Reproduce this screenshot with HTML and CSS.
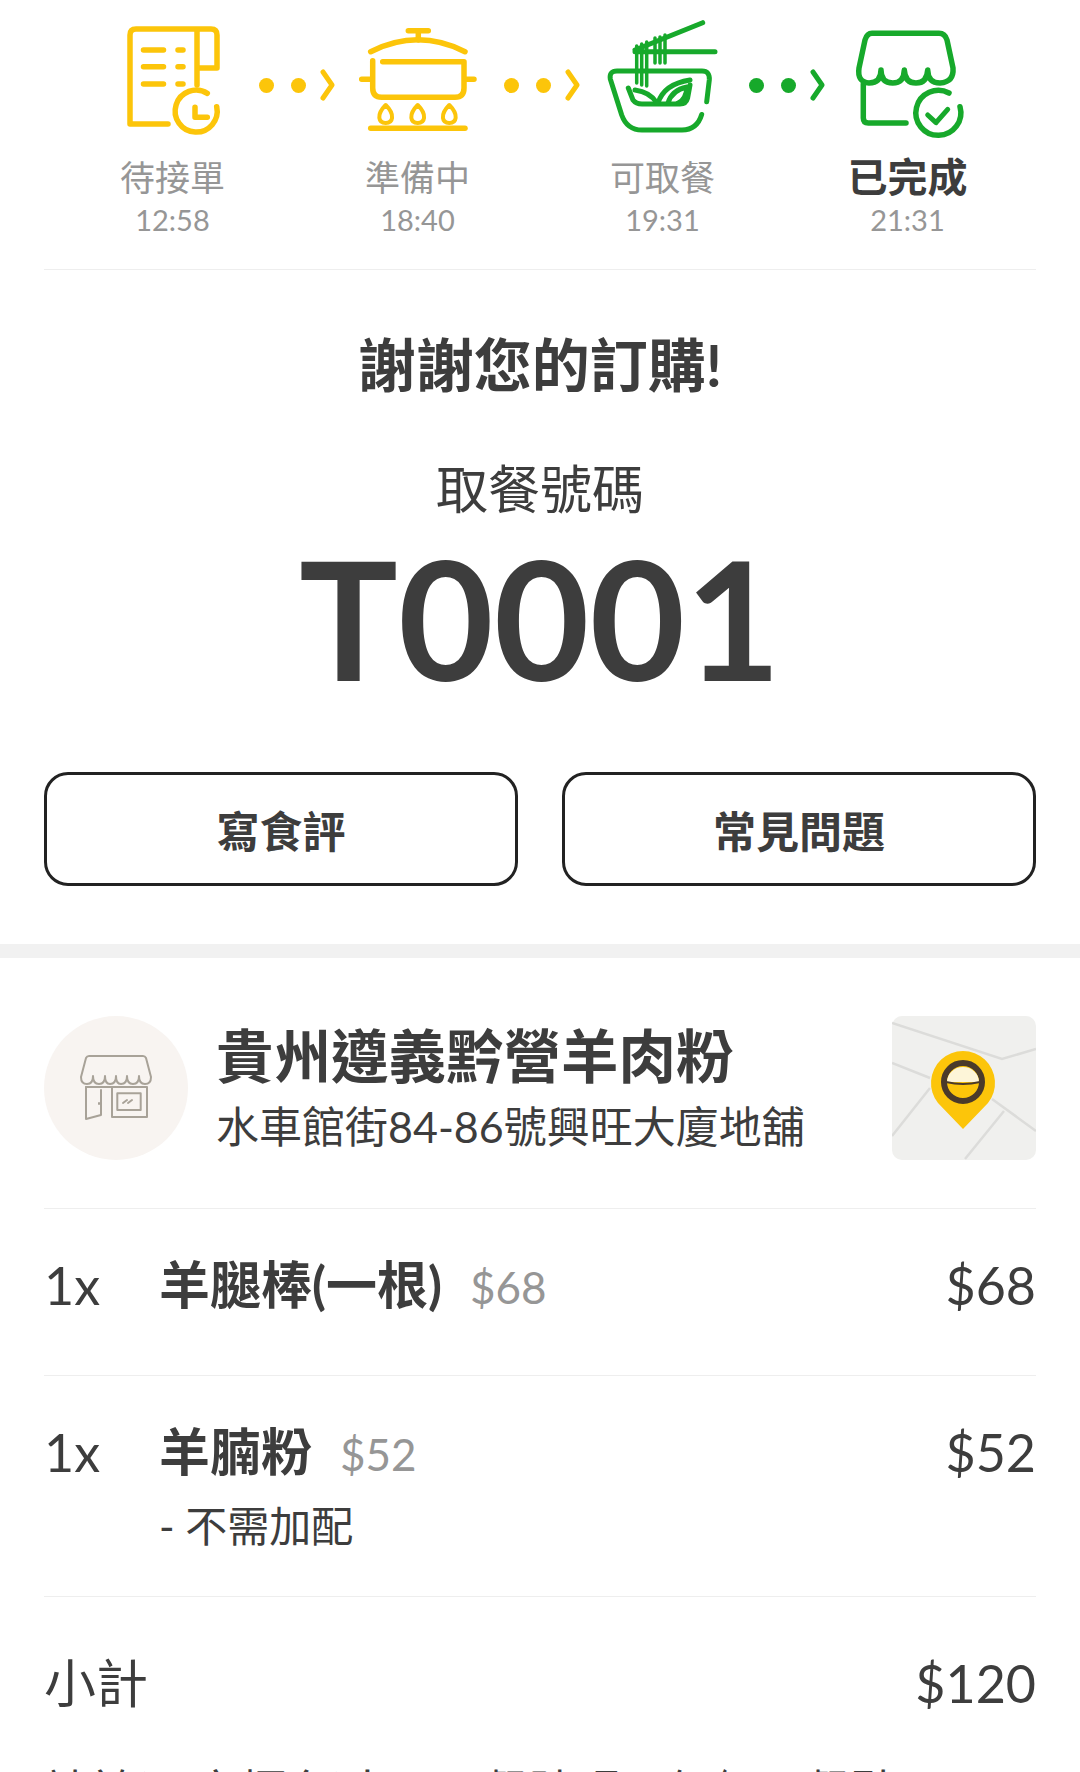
FILE: index.html
```html
<!DOCTYPE html>
<html lang="zh-Hant">
<head>
    <meta charset="UTF-8">
    <title>訂單</title>
    <link rel="stylesheet" href="styles.css">
</head>
<body>
    <div id="top">
        <div id="steps">
            <div class="step">
                <svg class="step-icon" viewBox="108 14 130 130" fill="none" stroke="#fcc50a" stroke-width="5.5" stroke-linecap="round" stroke-linejoin="round">
                    <path d="M168 124H130V35q0-6 6-6h75q6 0 6 6v33h-18"/>
                    <path d="M197 85V31"/>
                    <path d="M143.500 50h20M143.500 66.700h20M143.500 84h20M178 50h5M178 66.700h5M178 84h5"/>
                    <path d="M207.300 93.300A21 21 0 1 0 216.700 106.700"/>
                    <path d="M195 107.300v10h12.300"/>
                </svg>
                <div class="step-name">待接單</div>
                <div class="step-time">12:58</div>
            </div>
            <div class="dots yellow"><i></i><i></i>
                <svg viewBox="0 0 15 32" fill="none" stroke="currentColor" stroke-width="5" stroke-linecap="round" stroke-linejoin="round"><path d="M3 3l9 13-9 13"/></svg>
            </div>
            <div class="step">
                <svg class="step-icon" viewBox="353 14 130 130" fill="none" stroke="#fcc50a" stroke-width="5.500" stroke-linecap="round" stroke-linejoin="round">
                    <path d="M408.300 30.700h20M418.300 30.700V40"/>
                    <path d="M370.700 51.700Q418 28 465 51.700"/>
                    <path d="M372.700 60.700V88q0 9.300 9 9.300H455q9 0 9-9.300V61.700H382.700"/>
                    <path d="M361.700 79.300h10M465 79.300h9"/>
                    <path d="M370.700 128.300H465"/>
                    <path d="M385.700 105c-10 10-7 18 0 18s10-8 0-18zM417.700 105c-10 10-7 18 0 18s10-8 0-18zM449.300 105c-10 10-7 18 0 18s10-8 0-18z" stroke-width="4"/>
                </svg>
                <div class="step-name">準備中</div>
                <div class="step-time">18:40</div>
            </div>
            <div class="dots yellow"><i></i><i></i>
                <svg viewBox="0 0 15 32" fill="none" stroke="currentColor" stroke-width="5" stroke-linecap="round" stroke-linejoin="round"><path d="M3 3l9 13-9 13"/></svg>
            </div>
            <div class="step">
                <svg class="step-icon" viewBox="598 14 130 130" fill="none" stroke="#17a92b" stroke-width="5" stroke-linecap="round" stroke-linejoin="round">
                    <path d="M706.700 101.700L709.300 80Q710 71 702 71H617Q609 71 610.300 79L621.700 115Q627 130 642 130H682Q697 130 701.700 114.500"/>
                    <path d="M628.300 88L633 100Q636 104 642 104H680Q686 104 687.600 98L690 85"/>
                    <path d="M635 50L702.700 22.700M635 51.700H715"/>
                    <path d="M636.700 46V83M641.700 44V85M646.700 42V86M655 38V63M660 37V63M665 35V63" stroke-width="3.500"/>
                    <path d="M658 103Q664 84 690 80"/>
                    <path d="M668 103Q672 90 687 87Q686 100 678 103"/>
                    <path d="M635 90Q650 92 657 103"/>
                </svg>
                <div class="step-name">可取餐</div>
                <div class="step-time">19:31</div>
            </div>
            <div class="dots green"><i></i><i></i>
                <svg viewBox="0 0 15 32" fill="none" stroke="currentColor" stroke-width="5" stroke-linecap="round" stroke-linejoin="round"><path d="M3 3l9 13-9 13"/></svg>
            </div>
            <div class="step done">
                <svg class="step-icon" viewBox="842 14 130 130" fill="none" stroke="#17a92b" stroke-width="5.500" stroke-linecap="round" stroke-linejoin="round">
                    <path d="M871 33.300H938Q944 33.300 946 40L952 68Q953 82 939 83Q927 83 926.700 70Q926 83 915 83Q904 83 903.300 70Q903 83 891.700 83Q880 83 880 70Q880 83 868 83Q856 82 858 68L864 40Q866 33.300 871 33.300Z"/>
                    <path d="M862.300 84V118q0 5 5 5H905"/>
                    <path d="M948 93A22.500 22.500 0 1 0 959 106.700"/>
                    <path d="M926.700 115l8.300 7.700 11.700-13.400" stroke-width="5"/>
                </svg>
                <div class="step-name">已完成</div>
                <div class="step-time">21:31</div>
            </div>
        </div>
        <div class="thanks">謝謝您的訂購!</div>
        <div class="pickup-label">取餐號碼</div>
        <div class="pickup-num">T0001</div>
        <div class="btns">
            <button class="btn">寫食評</button>
            <button class="btn">常見問題</button>
        </div>
    </div>
    <div id="bottom">
        <div class="shop">
            <div class="shop-logo">
                <svg viewBox="0 0 72 66" fill="none" stroke="#a8a298" stroke-width="2" stroke-linecap="round" stroke-linejoin="round">
                    <path d="M9 1H63Q65 1 66 3L71 22Q71 29 65 29 59 29 59 21 59 29 53 29 47 29 47 21 47 29 41 29 36 29 36 21 36 29 30 29 25 29 25 21 25 29 19 29 13 29 13 21 13 29 7 29 1 29 1 22L6 3Q7 1 9 1Z"/>
                    <path d="M6 32H67V62H32V32"/>
                    <path d="M6 32V64L21 60V35"/>
                    <path d="M37.300 38.300H60.700V55H37.300Z"/>
                    <path d="M43 48l4-3M48 48l4-3"/>
                    <path d="M19 48v1"/>
                </svg>
            </div>
            <div class="shop-info">
                <div class="shop-name">貴州遵義黔營羊肉粉</div>
                <div class="shop-addr">水車館街84-86號興旺大廈地舖</div>
            </div>
            <svg class="shop-map" viewBox="0 0 144 144">
                <rect width="144" height="144" rx="10" fill="#f0f0ee"/>
                <path d="M0 7L110 43 144 33M0 47L38 62M100 83L144 115M38 72L0 120M112 95L73 143" fill="none" stroke="#dcdcda" stroke-width="2.500"/>
                <path d="M71 113L46 87A32 32 0 1 1 96 87Z" fill="#fcc50a"/>
                <circle cx="71" cy="66" r="19" fill="#fcc50a" stroke="#4a3a2a" stroke-width="6"/>
                <path d="M55 66a16 15 0 0 1 32 0z" fill="#fdf5d8"/>
                <path d="M54 66q17 4 34 0" fill="none" stroke="#4a3a2a" stroke-width="2"/>
            </svg>
        </div>
        <div class="item">
            <div class="qty">1x</div>
            <div class="item-main">
                <div class="item-title"><span class="item-name">羊腿棒(一根)</span><span class="item-unit">$68</span></div>
            </div>
            <div class="item-price">$68</div>
        </div>
        <div class="item">
            <div class="qty">1x</div>
            <div class="item-main">
                <div class="item-title"><span class="item-name">羊腩粉</span><span class="item-unit">$52</span></div>
                <div class="item-opt">- 不需加配</div>
            </div>
            <div class="item-price">$52</div>
        </div>
        <div class="total-row">
            <span>小計</span>
            <span>$120</span>
        </div>
        <div class="note">請於(門市櫃台)出示取餐號碼以便領取餐點</div>
    </div>
</body>
</html>
```

FILE: styles.css
```css
* { margin: 0; padding: 0; box-sizing: border-box; }
body {
    width: 1080px;
    height: 1772px;
    overflow: hidden;
    background-color: #fff;
    color: #3d3d3d;
    font-family: Lato, "Noto Sans CJK TC", sans-serif;
}
#top {
    padding: 0 44px;
}
#steps {
    height: 270px;
    display: flex;
    justify-content: center;
    align-items: flex-start;
    border-bottom: 1px solid #eee;
    padding-top: 14px;
}
.step {
    width: 130px;
    display: flex;
    flex-direction: column;
    align-items: center;
}
.step-icon {
    width: 130px;
    height: 130px;
    display: block;
}
.step-name {
    font-size: 35px;
    line-height: 40px;
    margin-top: 13px;
    color: #969696;
    white-space: nowrap;
}
.step-time {
    font-size: 29px;
    line-height: 34px;
    margin-top: 6px;
    color: #969696;
}
.done .step-name {
    font-weight: 700;
    font-size: 40px;
    color: #3d3d3d;
}
.dots {
    width: 115px;
    height: 130px;
    display: flex;
    justify-content: center;
    align-items: center;
    gap: 17px;
    margin-top: 6px;
    padding-left: 3px;
}
.dots i {
    width: 15px;
    height: 15px;
    border-radius: 50%;
    background-color: currentColor;
}
.dots svg {
    width: 15px;
    height: 32px;
    margin-left: -3px;
}
.yellow { color: #fcc50a; }
.green { color: #17a92b; }
.thanks {
    text-align: center;
    font-size: 58px;
    font-weight: 700;
    line-height: 70px;
    margin-top: 60px;
}
.pickup-label {
    text-align: center;
    font-size: 52px;
    line-height: 66px;
    margin-top: 56px;
}
.pickup-num {
    text-align: center;
    font-size: 165px;
    font-weight: 700;
    line-height: 180px;
    margin-top: 5px;
}
.btns {
    display: flex;
    gap: 44px;
    margin-top: 65px;
}
.btn {
    flex: 1;
    height: 114px;
    background-color: #fff;
    border: 3px solid #222;
    border-radius: 24px;
    font-family: inherit;
    font-size: 43px;
    font-weight: 700;
    color: #3d3d3d;
}
#bottom {
    margin-top: 58px;
    border-top: 14px solid #f1f1f1;
    padding: 0 44px;
}
.shop {
    display: flex;
    align-items: center;
    padding: 58px 0 48px;
    border-bottom: 1px solid #eee;
}
.shop-logo {
    width: 144px;
    height: 144px;
    border-radius: 50%;
    background-color: #f8f4f1;
    display: flex;
    justify-content: center;
    align-items: center;
    flex-shrink: 0;
}
.shop-logo svg {
    width: 72px;
    height: 66px;
}
.shop-info {
    flex: 1;
    padding-left: 28px;
}
.shop-name {
    font-size: 57.5px;
    font-weight: 700;
    line-height: 70px;
}
.shop-addr {
    font-size: 43px;
    line-height: 56px;
    margin-top: 8px;
}
.shop-map {
    width: 144px;
    height: 144px;
    flex-shrink: 0;
}
.item {
    display: flex;
    align-items: flex-start;
    padding: 40px 0 42px;
    border-bottom: 1px solid #eee;
}
.qty {
    width: 115px;
    font-size: 52px;
    line-height: 72px;
}
.item-main {
    flex: 1;
    min-height: 84px;
}
.item-title {
    display: flex;
    align-items: center;
    gap: 28px;
}
.item-name {
    font-size: 51px;
    font-weight: 700;
    line-height: 72px;
}
.item-unit {
    font-size: 44px;
    color: #969696;
    margin-top: 4px;
}
.item-opt {
    font-size: 42px;
    line-height: 56px;
    margin-top: 10px;
}
.item-price {
    font-size: 52px;
    line-height: 72px;
}
.total-row {
    display: flex;
    justify-content: space-between;
    padding-top: 50px;
    font-size: 52px;
    line-height: 72px;
}
.note {
    font-size: 46px;
    line-height: 56px;
    margin-top: 44px;
}
```
